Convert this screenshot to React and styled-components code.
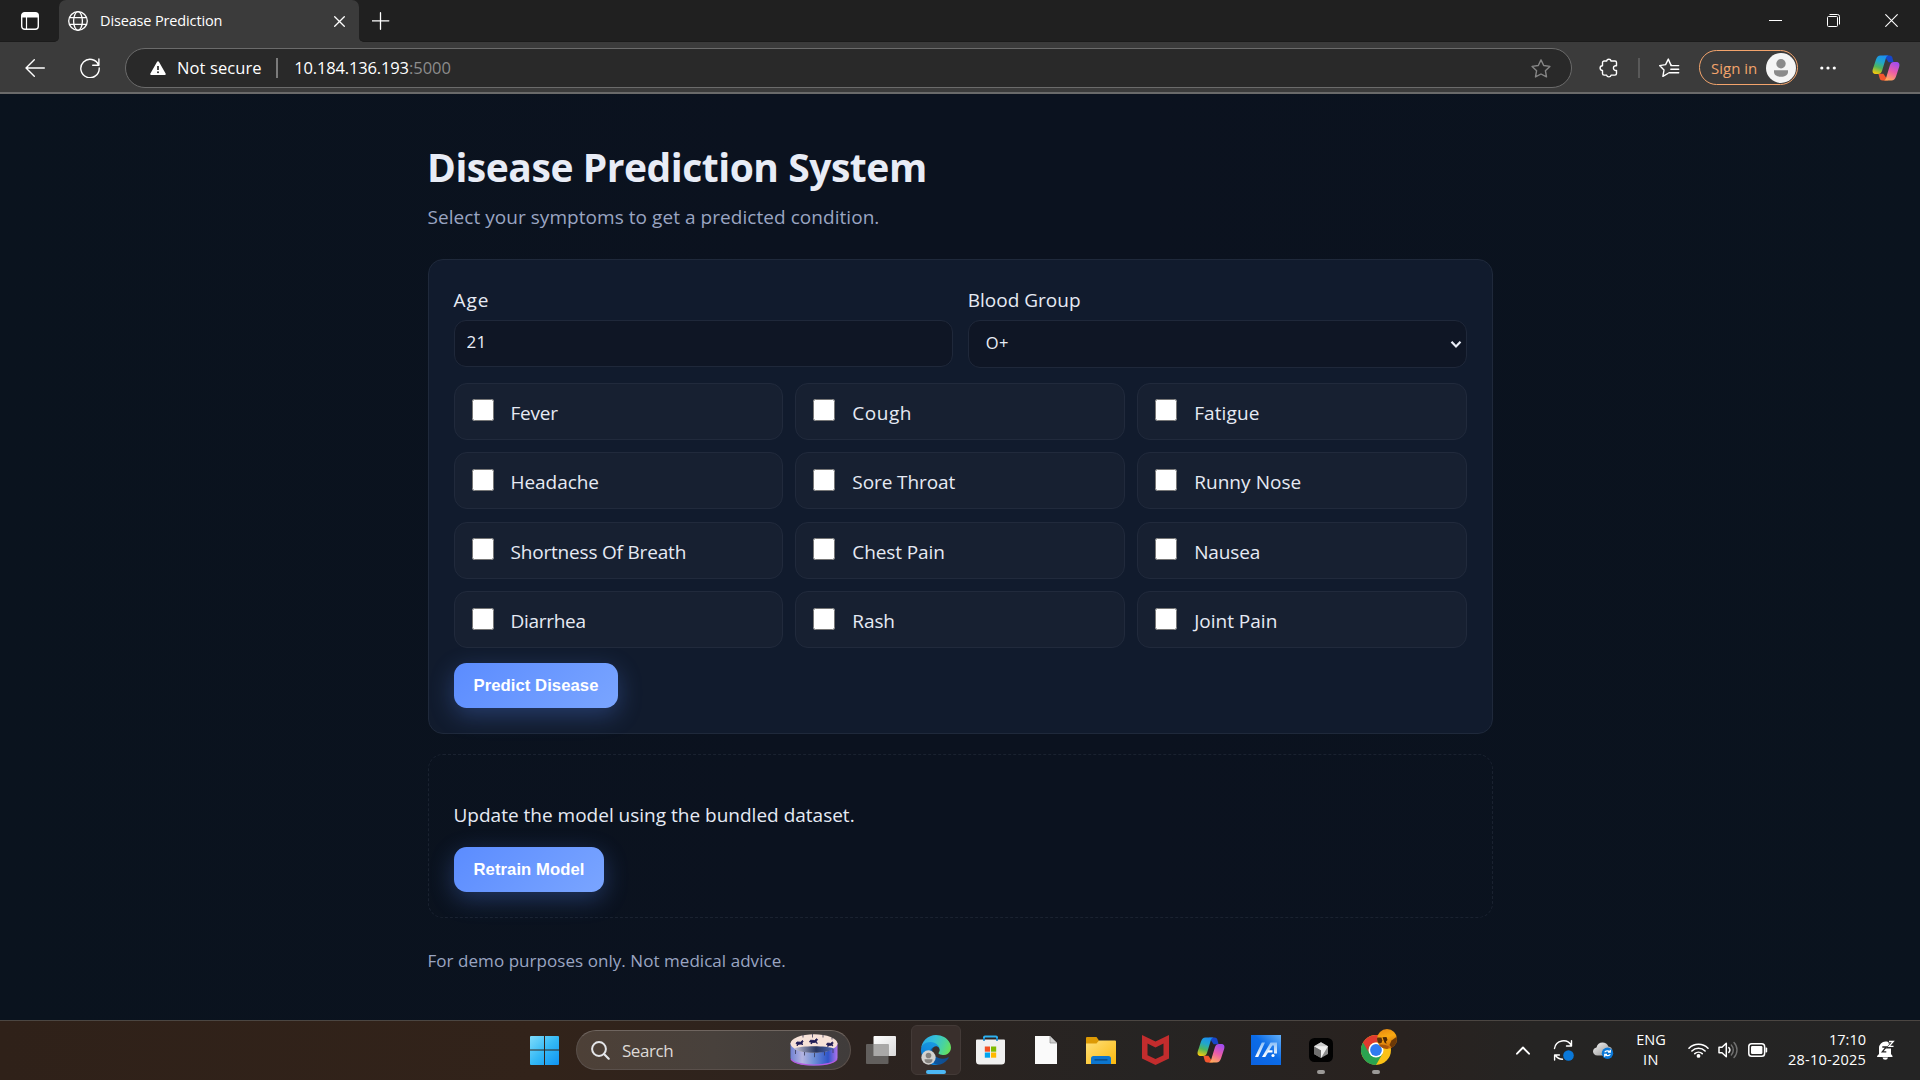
import React from "react";
import styled, { createGlobalStyle } from "styled-components";

const Global = createGlobalStyle`
  * { box-sizing: border-box; }
  html, body { margin: 0; padding: 0; background: #0b121e; overflow: hidden; }
  body { font-family: "Open Sans", "Noto Sans", sans-serif; }
  svg { display: block; flex: none; }
`;

const Screen = styled.div`
  width: 1920px;
  height: 1080px;
  display: flex;
  flex-direction: column;
  overflow: hidden;
`;

const Label = styled.span`
  white-space: nowrap;
  font-size: ${(p) => p.$size || 19}px;
  letter-spacing: ${(p) => p.$track || 0}px;
  color: ${(p) => p.$color || "#e6eaf4"};
`;

/* ---------- browser chrome ---------- */

const TabStrip = styled.header`
  height: 42px;
  flex: none;
  display: flex;
  background: #3b3b3b;
`;

const StripStart = styled.div`
  width: 59px;
  padding: 12px 0 0 21px;
  background: #202020;
  border-bottom: 1px solid #1b1b1b;
  border-bottom-right-radius: 5px;
`;

const TabHolder = styled.div`
  width: 300px;
  background: linear-gradient(#202020 50%, #3b3b3b 50%);
`;

const Tab = styled.div`
  height: 42px;
  padding: 0 14px 0 9px;
  display: flex;
  align-items: center;
  background: #3b3b3b;
  border-radius: 7px 7px 0 0;
`;

const TabTitle = styled(Label)`
  flex: 1;
  padding: 0 0 2px 12px;
`;

const StripEnd = styled.div`
  flex: 1;
  display: flex;
  align-items: center;
  padding: 0 22px 0 13px;
  background: #202020;
  border-bottom: 1px solid #1b1b1b;
  border-bottom-left-radius: 5px;
`;

const WindowControls = styled.div`
  margin-left: auto;
  display: flex;
  align-items: center;
  gap: 45px;
`;

const Toolbar = styled.nav`
  height: 52px;
  flex: none;
  display: flex;
  align-items: center;
  padding: 2px 20px 0 25px;
  background: #3b3b3b;
  border-bottom: 2px solid #6a6a6a;
`;

const ReloadSlot = styled.div`
  padding: 0 25px 0 35px;
`;

const AddressBar = styled.div`
  width: 1447px;
  height: 40px;
  display: flex;
  align-items: center;
  padding: 0 20px 0 24px;
  background: #292929;
  border: 1px solid #6b6b6b;
  border-radius: 20px;
`;

const AddressText = styled(Label)`
  padding: 0 0 2px ${(p) => p.$lead || 0}px;
`;

const BarDivider = styled.span`
  width: ${(p) => p.$thick || 1}px;
  height: 20px;
  margin: 0 ${(p) => p.$after}px 0 ${(p) => p.$before}px;
  background: ${(p) => p.$tone};
`;

const StarSlot = styled.div`
  margin-left: auto;
`;

const ExtensionSlot = styled.div`
  padding-left: 27px;
`;

const SignIn = styled.div`
  width: 99px;
  height: 35px;
  margin: 0 22px 1px 19px;
  padding: 0 1px 0 11px;
  display: flex;
  align-items: center;
  justify-content: space-between;
  border: 1.4px solid #f3a46c;
  border-radius: 18px;
`;

const MenuSlot = styled.div`
  padding-right: 35px;
`;

/* ---------- page ---------- */

const Page = styled.main`
  height: 926px;
  flex: none;
  padding: 49px 427px 0 427.5px;
  background: linear-gradient(90deg, #0a131e, #0b121f 40%, #0b121f 60%, #0a131e);
`;

const Title = styled.h1`
  margin: 0 0 11px -0.5px;
  font-size: 39px;
  line-height: 48px;
  font-weight: 700;
  letter-spacing: -0.46px;
  color: #e8ecf6;
`;

const Subtitle = styled.p`
  margin: 0 0 27px;
  font-size: 19px;
  line-height: 30px;
  letter-spacing: 0.05px;
  color: #9aa5c2;
`;

const Panel = styled.section`
  padding: 25px;
  border-radius: 15px;
  border: 1px solid #1f293b;
  background: #111b2d;
`;

const DashedPanel = styled(Panel)`
  margin-top: 20px;
  border: 1px dashed #1a2230;
  background: transparent;
`;

const Fields = styled.div`
  display: grid;
  grid-template-columns: 1fr 1fr;
  gap: 15px;
  align-items: start;
`;

const Field = styled.label`
  display: flex;
  flex-direction: column;
  gap: 5px;
  line-height: 30px;
`;

const NumberInput = styled.input`
  width: 100%;
  height: 47px;
  margin: 0;
  padding: 0 12px 4px;
  font: 17px "Open Sans", sans-serif;
  letter-spacing: 0.4px;
  color: #e9edf6;
  background: #0f1625;
  border: 1px solid #1f283a;
  border-radius: 12px;
  outline: none;
  appearance: textfield;
`;

const SelectBox = styled.div`
  position: relative;
  height: 48px;
`;

const Select = styled.select`
  width: 100%;
  height: 48px;
  padding: 0 17px 3px;
  font: 16.5px "Open Sans", sans-serif;
  letter-spacing: 0.5px;
  color: #e9edf6;
  background: #0f1625;
  border: 1px solid #1f283a;
  border-radius: 12px;
  appearance: none;
`;

const SelectArrow = styled.svg`
  position: absolute;
  right: 5px;
  top: 20px;
`;

const Symptoms = styled.div`
  display: grid;
  grid-template-columns: repeat(3, 1fr);
  gap: 12.5px 12px;
  margin: 14.6px 0 15.4px;
`;

const Symptom = styled.label`
  height: 57px;
  padding: 0 17px;
  display: flex;
  align-items: center;
  gap: 17px;
  background: #172031;
  border: 1px solid #212a3c;
  border-radius: 13px;
`;

const Check = styled.input`
  width: 22px;
  height: 22px;
  margin: 0 0 2px;
`;

const SymptomName = styled(Label)`
  padding-top: 3px;
`;

const Action = styled.button`
  display: block;
  width: ${(p) => p.$width}px;
  height: 45px;
  padding: 0 0 0 1px;
  border: 0;
  border-radius: 12.5px;
  font: 700 16.67px "Liberation Sans", Arial, sans-serif;
  letter-spacing: 0.06px;
  color: #fff;
  background: linear-gradient(135deg, #5b8cff, #7aa5ff);
  box-shadow: 0 7px 25px rgba(91, 140, 255, 0.3);
`;

const Notice = styled.p`
  margin: 20px 0 17px;
  font-size: 19px;
  line-height: 30px;
  color: #e6eaf4;
`;

const Footnote = styled.footer`
  margin-top: 30px;
  font-size: 17px;
  line-height: 25px;
  letter-spacing: 0.05px;
  color: #9aa5c2;
`;

/* ---------- taskbar ---------- */

const Taskbar = styled.div`
  height: 60px;
  flex: none;
  display: flex;
  align-items: center;
  padding-bottom: 1px;
  border-top: 1px solid #4b4642;
  background: linear-gradient(90deg, #2f2119 0%, #32231a 28%, #2c231f 45%, #262423 60%, #29221f 73%, #252423 80%, #242424 100%);
`;

const Launchers = styled.div`
  display: flex;
  align-items: center;
  padding-left: 519px;
`;

const Slot = styled.div`
  width: 50px;
  height: 50px;
  margin-right: 5px;
  display: flex;
  flex-direction: column;
  align-items: center;
  justify-content: center;
  position: relative;
  border-radius: 6px;
  border: 1px solid ${(p) => (p.$active ? "#433a37" : "transparent")};
  background: ${(p) => (p.$active ? "#392f2c" : "transparent")};
`;

const Indicator = styled.span`
  position: absolute;
  bottom: 0;
  width: ${(p) => (p.$active ? 20 : 8)}px;
  height: 4px;
  border-radius: 2px;
  background: ${(p) => (p.$active ? "#4cb8f5" : "#9b9997")};
`;

const SearchPill = styled.div`
  width: 275px;
  height: 40px;
  margin: 0 5px 0 2px;
  padding: 0 12px 0 14px;
  display: flex;
  align-items: center;
  border-radius: 20px;
  border: 1px solid #5a504b;
  border-top-color: #6f655f;
  background: linear-gradient(90deg, #4d4037, #48413c 50%, #403c3b);
`;

const SearchLabel = styled(Label)`
  flex: 1;
  padding-left: 12px;
`;

const Tray = styled.div`
  margin-left: auto;
  display: flex;
  align-items: center;
  padding-right: 25px;
`;

const TrayGap = styled.div`
  padding-left: ${(p) => p.$w}px;
`;

const Stack = styled.div`
  width: ${(p) => p.$width}px;
  display: flex;
  flex-direction: column;
  align-items: ${(p) => p.$align};
  line-height: 20px;
`;

/* ---------- icons ---------- */

const line = { fill: "none", stroke: "#fff", strokeWidth: 1.4, strokeLinecap: "round", strokeLinejoin: "round" };

const TabActions = () => (
  <svg width="18" height="18" viewBox="0 0 18 18">
    <rect x="0.7" y="0.7" width="16.6" height="16.6" rx="3" {...line} />
    <path d="M.7 5.5V3.5a2.8 2.8 0 0 1 2.8-2.8h11a2.8 2.8 0 0 1 2.8 2.8v2z" fill="#fff" />
    <path d="M5.5 5v12" {...line} strokeWidth="1.2" />
  </svg>
);

const Globe = () => (
  <svg width="20" height="20" viewBox="0 0 20 20" fill="none" stroke="#fff" strokeWidth="1.3">
    <circle cx="10" cy="10" r="9.3" />
    <ellipse cx="10" cy="10" rx="4.4" ry="9.3" />
    <path d="M1.4 6.7h17.2M1.4 13.3h17.2" />
  </svg>
);

const Cross = ({ size, weight = 1.3 }) => (
  <svg width={size} height={size} viewBox={`0 0 ${size} ${size}`}>
    <path d={`M.7 .7L${size - 0.7} ${size - 0.7}M${size - 0.7} .7L.7 ${size - 0.7}`} {...line} strokeWidth={weight} />
  </svg>
);

const Plus = () => (
  <svg width="18" height="18" viewBox="0 0 18 18"><path d="M8.5 .7v16.6M.2 8.8h16.6" {...line} strokeWidth="1.3" /></svg>
);

const Minimize = () => (
  <svg width="13" height="13" viewBox="0 0 13 13"><path d="M0 6.5h13" stroke="#fff" /></svg>
);

const Restore = () => (
  <svg width="13" height="13" viewBox="0 0 13 13" fill="none" stroke="#fff">
    <rect x=".5" y="2.5" width="10" height="10" rx="1" />
    <path d="M2.5 .5h8a2 2 0 0 1 2 2v8" />
  </svg>
);

const Back = () => (
  <svg width="20" height="18" viewBox="0 0 20 18"><path d="M9.3 .8L1 9l8.3 8.2M1 9h18.3" {...line} /></svg>
);

const Reload = () => (
  <svg width="20" height="20" viewBox="0 0 20 20">
    <path d="M18.6 7.2A9.2 9.2 0 1 0 19.2 10M18.9 .9v6.4h-6.2" {...line} />
  </svg>
);

const Warning = () => (
  <svg width="16" height="14" viewBox="0 0 16 14">
    <path d="M7.1 .7a1 1 0 0 1 1.8 0l6.7 11.8a1 1 0 0 1-.9 1.4H1.3a1 1 0 0 1-.9-1.4z" fill="#fff" />
    <path d="M8 5v4" stroke="#292929" strokeWidth="1.7" />
    <circle cx="8" cy="11.2" r="1" fill="#292929" />
  </svg>
);

const Star = () => (
  <svg width="20" height="19" viewBox="0 0 20 19">
    <path d="M10 .9l2.7 5.6 6.2.9-4.5 4.3 1.1 6.2L10 15l-5.5 2.9 1.1-6.2L1.1 7.4l6.2-.9z" {...line} stroke="#868686" />
  </svg>
);

const Puzzle = () => (
  <svg width="19" height="20" viewBox="0 0 19 20">
    <path d="M5.2 3h2.4a2.3 2.3 0 0 1 4.5 0H16a1.5 1.5 0 0 1 1.5 1.5v3.3a2.4 2.4 0 1 0 0 4.6v3.2A1.5 1.5 0 0 1 16 17.1h-3.9a2.3 2.3 0 0 1-4.5 0H5.2a1.7 1.7 0 0 1-1.7-1.7v-2.9a2.4 2.4 0 0 1 0-4.8V4.7A1.7 1.7 0 0 1 5.2 3z" {...line} />
  </svg>
);

const Favorites = () => (
  <svg width="21" height="20" viewBox="0 0 21 20">
    <path d="M12.3 7l-.5-.1L9.3 1.1 6.6 6.6l-6 1 4.4 4.4-1.1 6.4 4.9-2.9M11.8 7.6h7.9M11.8 11.2h7.9M9.9 14.8h9.8" {...line} />
  </svg>
);

const Avatar = ({ size = 30 }) => (
  <svg width={size} height={size} viewBox="0 0 30 30">
    <circle cx="15" cy="15" r="15" fill="#f4f4f4" />
    <circle cx="15" cy="10.7" r="4.7" fill="#8a8a8a" />
    <path d="M8 17.2h14v1.8c0 3-3 4.8-7 4.8s-7-1.8-7-4.8z" fill="#8a8a8a" />
  </svg>
);

const Dots = () => (
  <svg width="17" height="4" viewBox="0 0 17 4" fill="#fff">
    <circle cx="1.8" cy="2" r="1.6" /><circle cx="8" cy="2" r="1.6" /><circle cx="14.3" cy="2" r="1.6" />
  </svg>
);

const Copilot = ({ id }) => (
  <svg width="28" height="26" viewBox="0 0 28 26">
    <defs>
      <linearGradient id={`${id}a`} x1=".6" y1="0" x2=".3" y2="1">
        <stop offset="0" stopColor="#1b8ff0" /><stop offset=".35" stopColor="#22a7c9" />
        <stop offset=".65" stopColor="#4fb65c" /><stop offset="1" stopColor="#f2c80f" />
      </linearGradient>
      <linearGradient id={`${id}b`} x1=".7" y1="0" x2=".3" y2="1">
        <stop offset="0" stopColor="#a14cf0" /><stop offset=".5" stopColor="#ec5ca8" /><stop offset="1" stopColor="#ffab5c" />
      </linearGradient>
    </defs>
    <path d="M12 .5h5.5c2 0 2.6 1.2 3.1 3l1 3.7h-5z" fill="#1746c9" />
    <path d="M16 25.5h-5.5c-2 0-2.6-1.2-3.1-3l-1-3.7h5z" fill="#f2562f" />
    <path d="M8.5 .5h8c-1.7.3-2.3 1.6-2.8 3.3L10 16c-.7 2-1.9 3-3.8 3H4C1 19 0 17 .8 14.2L4 4.5c1-2.7 2.2-4 4.5-4z" fill={`url(#${id}a)`} />
    <path d="M19.5 25.5h-8c1.7-.3 2.3-1.6 2.8-3.3L18 10c.7-2 1.9-3 3.8-3H24c3 0 4 2 3.2 4.8L24 21.5c-1 2.7-2.2 4-4.5 4z" fill={`url(#${id}b)`} />
  </svg>
);

const Windows = () => (
  <svg width="30" height="30" viewBox="0 0 30 30">
    <defs><linearGradient id="win" x1="0" y1="0" x2="1" y2="1"><stop offset="0" stopColor="#7fdcfb" /><stop offset=".5" stopColor="#35b9f5" /><stop offset="1" stopColor="#0f93f2" /></linearGradient></defs>
    <path d="M1 2a1 1 0 0 1 1-1h13v13.5H1zM16 1h13a1 1 0 0 1 1 1v12.5H16zM1 15.5h14V30H2a1 1 0 0 1-1-1zM16 15.5h14V29a1 1 0 0 1-1 1H16z" fill="url(#win)" />
  </svg>
);

const Magnifier = () => (
  <svg width="19" height="19" viewBox="0 0 19 19">
    <circle cx="8" cy="8" r="6.9" fill="none" stroke="#e4e6ea" strokeWidth="2" />
    <path d="M13 13l4.7 4.7" stroke="#e4e6ea" strokeWidth="2.2" strokeLinecap="round" />
  </svg>
);

const Zoetrope = () => (
  <svg width="48" height="32" viewBox="0 0 48 32">
    <defs>
      <linearGradient id="zoe" x1="0" x2="1"><stop offset="0" stopColor="#7182d4" /><stop offset=".25" stopColor="#b4b4e0" /><stop offset=".5" stopColor="#6f8fd6" /><stop offset=".8" stopColor="#2f55c8" /><stop offset="1" stopColor="#b073ee" /></linearGradient>
      <linearGradient id="zoeIn" x1="0" x2="1"><stop offset="0" stopColor="#c8c6da" /><stop offset=".55" stopColor="#27355f" /><stop offset="1" stopColor="#4d68b8" /></linearGradient>
    </defs>
    <path d="M.5 9v15c0 4 10 7.5 23.5 7.5S47.5 28 47.5 24V9z" fill="url(#zoe)" />
    <path d="M1 25c2 3.5 11 6 23 6s21-2.5 23-6" fill="none" stroke="#b45be0" strokeWidth="1.2" />
    <ellipse cx="24" cy="9.5" rx="23.5" ry="9.2" fill="#f7e2d8" />
    <path d="M4 14.5C11 11.5 37 11.5 44 14.5 40 17.5 33 18.7 24 18.7S8 17.5 4 14.5z" fill="url(#zoeIn)" />
    <path d="M6 9.5l1-1.5 3.5.2 2-1.7.6.7-1.1 1.8.5 2-1-1-2.7.2-1.8 1.6.4-2zM19.5 8l1-1.8 4 .3 2.3-1.8.7.9-1.2 1.8 1 2.1-1.8-1.2-2.7.2-1.8 1.5.4-2.1zM36.5 10.5l.9-1.4 3.2.3 1.8-1.3.8.7-1 1.5.6 1.7-1.3-.8-2.4.2-1.4 1.2.3-1.6z" fill="#1e1b55" stroke="#1e1b55" strokeWidth=".9" />
    <path d="M13 1v2.5M22.5 0v3.5M33 1v2.5M42 3.5v2M5.5 16v4M14.5 18v3.5M24.5 18.7v4.5M34.5 18v3.5M43 15v4" stroke="#3a3b58" strokeWidth=".8" />
  </svg>
);

const TaskView = () => (
  <svg width="30" height="28" viewBox="0 0 30 28">
    <defs><linearGradient id="tv" x1="0" y1="0" x2="1" y2="1"><stop offset="0" stopColor="#fff" /><stop offset="1" stopColor="#d9d9d9" /></linearGradient></defs>
    <rect x="7.5" y="0" width="22.5" height="20" rx="1" fill="url(#tv)" />
    <rect x="0" y="8" width="22.5" height="20" rx="1" fill="#686664" fillOpacity=".9" />
    <path d="M7.5 8h15v12h-15z" fill="#a9a8a7" />
  </svg>
);

const Edge = () => (
  <svg width="30" height="30" viewBox="0 0 256 256">
    <defs>
      <linearGradient id="ea" x1=".2" y1=".5" x2="1" y2=".5"><stop offset="0" stopColor="#0c59a4" /><stop offset="1" stopColor="#114a8b" /></linearGradient>
      <linearGradient id="eb" x1=".7" y1="0" x2=".3" y2="1"><stop offset="0" stopColor="#1b9de2" /><stop offset=".6" stopColor="#0f86dc" /><stop offset="1" stopColor="#0078d4" /></linearGradient>
      <linearGradient id="ec" x1="0" y1=".3" x2="1" y2=".6"><stop offset="0" stopColor="#28a9e8" /><stop offset=".4" stopColor="#35c1d8" /><stop offset=".75" stopColor="#4bd49a" /><stop offset="1" stopColor="#66e05c" /></linearGradient>
    </defs>
    <path fill="url(#ea)" d="M231 190.5c-3.4 1.8-6.9 3.4-10.5 4.7-11.5 4.3-23.6 6.5-35.9 6.5-47.3 0-88.5-32.5-88.5-74.3.1-11.4 6.4-21.9 16.4-27.3-42.8 1.8-53.8 46.4-53.8 72.5 0 73.9 68.1 81.4 82.8 81.4 7.9 0 19.8-2.3 27-4.6l1.3-.4c27.6-9.5 51-28.1 66.6-52.8 1.2-1.9.6-4.3-1.2-5.5-1.3-.8-2.9-.9-4.2-.2z" />
    <path fill="url(#eb)" d="M105.7 241.4c-8.9-5.5-16.6-12.8-22.7-21.3-26.3-36-18.4-86.5 17.6-112.8 3.8-2.7 7.7-5.2 11.9-7.2 3.1-1.5 8.4-4.1 15.5-4 10.1.1 19.6 4.9 25.7 13 4 5.4 6.3 11.9 6.4 18.7 0-.2 24.5-79.6-80-79.6-43.9 0-80 41.7-80 78.2-.2 19.3 4 38.5 12.1 56 27.6 58.8 94.8 87.6 156.4 67.1-21.1 6.6-44.1 3.7-62.9-8.1z" />
    <path fill="url(#ec)" d="M152.3 148.9c-.8 1-3.3 2.5-3.3 5.7 0 2.6 1.7 5.1 4.7 7.2 14.4 10 41.5 8.7 41.6 8.7 10.7 0 21.1-2.9 30.3-8.3 18.8-11 30.4-31.1 30.4-52.9.3-22.4-8-37.3-11.3-43.9C223.5 23.9 177.7 0 128 0 58 0 1 56.2 0 126.2c.5-36.5 36.8-66 80-66 3.5 0 23.5.3 42 10.1 16.3 8.6 24.9 18.9 30.8 29.2 6.2 10.7 7.3 24.1 7.3 29.5s-2.7 13.3-7.8 19.9z" />
    <circle cx="64" cy="192" r="61" fill="#d4d2d0" />
    <circle cx="64" cy="175" r="24" fill="#85827f" />
    <path fill="#85827f" d="M30 206h68c2 22-14 34-34 34s-36-12-34-34z" />
  </svg>
);

const Store = () => (
  <svg width="30" height="30" viewBox="0 0 30 30">
    <path d="M8 7V2.5a1 1 0 0 1 1-1h11a1 1 0 0 1 1 1V7" fill="none" stroke="#2fb1ef" strokeWidth="2" />
    <path d="M0 5.5a1 1 0 0 1 1-1h27a1 1 0 0 1 1 1V26a3.5 3.5 0 0 1-3.5 3.5h-22A3.5 3.5 0 0 1 0 26z" fill="#f0f0f0" />
    <path d="M8 5.8V3M21 5.8V3" stroke="#1783c4" strokeWidth="2" />
    <path d="M8.8 11.5H14v5.2H8.8z" fill="#f25022" /><path d="M15 11.5h5.2v5.2H15z" fill="#7fba00" />
    <path d="M8.8 17.5H14v5.2H8.8z" fill="#00a4ef" /><path d="M15 17.5h5.2v5.2H15z" fill="#ffb900" />
  </svg>
);

const Doc = () => (
  <svg width="22" height="28" viewBox="0 0 22 28">
    <path d="M0 0h15l7 7v21H0z" fill="#fafafa" />
    <path d="M15 0v7h7z" fill="#cfcfcf" stroke="#8a8a8a" strokeWidth=".7" />
  </svg>
);

const Folder = () => (
  <svg width="30" height="27" viewBox="0 0 30 27">
    <defs><linearGradient id="fo" x1="0" y1="0" x2="1" y2="1"><stop offset="0" stopColor="#ffe07a" /><stop offset="1" stopColor="#fbb90d" /></linearGradient></defs>
    <path d="M0 1a1 1 0 0 1 1-1h9.5L13 3.5V8H0z" fill="#dd9a05" />
    <path d="M0 6.5h10.5L13 3.5h16a1 1 0 0 1 1 1V27H0z" fill="url(#fo)" />
    <path d="M5 27v-5.5a2.5 2.5 0 0 1 2.5-2.5h15a2.5 2.5 0 0 1 2.5 2.5V27z" fill="#0c76cf" />
    <path d="M9 22.8h12" stroke="#08467f" strokeWidth="1.3" strokeLinecap="round" />
  </svg>
);

const Shield = () => (
  <svg width="28" height="30" viewBox="0 0 28 30">
    <path fillRule="evenodd" d="M0 0l13.5 6.5L27 0v23.5L13.5 30 0 23.5zM5.5 8.5v11.7l8 3.8 8-3.8V8.5l-8 4z" fill="#c22c2d" />
  </svg>
);

const Asus = () => (
  <svg width="30" height="30" viewBox="0 0 30 30">
    <defs>
      <linearGradient id="as" x1="0" y1="1" x2="1" y2="0"><stop offset="0" stopColor="#0b62e0" /><stop offset=".55" stopColor="#0b6ce8" /><stop offset="1" stopColor="#63b0fa" /></linearGradient>
      <linearGradient id="at" x1="0" y1="1" x2="0" y2="0"><stop offset="0" stopColor="#fff" /><stop offset="1" stopColor="#8cc0f8" /></linearGradient>
    </defs>
    <path d="M0 0h30v30H0z" fill="url(#as)" />
    <path d="M4 22L10.8 7.5H14L7.2 22zM11 22L19.5 7.5H26V18.5h-3v-8h-1.8L14.3 22z" fill="url(#at)" />
    <path d="M17.5 15.3h4v2.2h-5.200z" fill="#fff" />
    <circle cx="22" cy="20.5" r="1.6" fill="#fff" />
  </svg>
);

const CursorApp = () => (
  <svg width="24" height="24" viewBox="0 0 24 24">
    <rect width="24" height="24" rx="5.5" fill="#020202" />
    <path d="M12 4.3l7 4V16l-7 4-7-4V8.3z" fill="#8d8d8d" />
    <path d="M12 4.3l7 4-7 3.9-7-3.9z" fill="#c9c9c9" />
    <path d="M12 12.2V20l-7-4V8.3z" fill="#6f6f6f" />
    <path d="M5 8.3h14L12 20v-7.7z" fill="#eee" />
  </svg>
);

const Chrome = () => (
  <svg width="36" height="36" viewBox="0 0 36 36">
    <defs>
      <clipPath id="badge"><circle cx="26" cy="10" r="10" /></clipPath>
      <linearGradient id="amber" x1=".3" y1="0" x2=".6" y2="1"><stop offset="0" stopColor="#e88a10" /><stop offset=".4" stopColor="#f9a912" /><stop offset="1" stopColor="#c8650a" /></linearGradient>
    </defs>
    <circle cx="15" cy="21" r="15" fill="#fbc116" />
    <path d="M15 21L2 13.5A15 15 0 0 0 15 36l6.5-11.3z" fill="#2aa350" />
    <path d="M2 13.5A15 15 0 0 1 28 13.5H15A7.5 7.5 0 0 0 8.5 24.7z" fill="#e03b2f" />
    <circle cx="15" cy="21" r="7.5" fill="#fff" /><circle cx="15" cy="21" r="5.9" fill="#2f7bf0" />
    <g clipPath="url(#badge)">
      <path d="M16 0h20v20H16z" fill="url(#amber)" />
      <path d="M16 8.5h4.5l.8 3-.8 2.5-2.5.5-2-2z" fill="#5c300a" />
      <path d="M21.5 8.3l4-.3 1 3-1.5 1.5.5 2.5-2-1.5-1-2.5z" fill="#4a2606" />
      <path d="M30.5 11.5l5.5-4V16l-4.5 3.5-3-3.5z" fill="#6b3908" />
      <path d="M17 16c4-1 8 0 11 1.5l-2 3-7-1z" fill="#a8550a" />
    </g>
  </svg>
);

const ChromeBox = styled.div`
  margin: -6px -6px 0 0;
`;

const ChevronUp = () => (
  <svg width="14" height="9" viewBox="0 0 14 9"><path d="M1 7.7L7 1.5l6 6.2" {...line} strokeWidth="1.9" /></svg>
);

const SyncUpdate = () => (
  <svg width="21" height="21" viewBox="0 0 21 21">
    <path d="M1.5 8.5A9 9 0 0 1 18.3 5.5M18.5 .8v5.2h-5M2.5 15.5A9 9 0 0 0 9.5 19.2M1.6 20v-5h4.8" {...line} />
    <circle cx="15.5" cy="15.5" r="5.3" fill="#0a78d8" />
  </svg>
);

const CloudSync = () => (
  <svg width="21" height="17" viewBox="0 0 21 17">
    <defs><linearGradient id="cl" x1="0" y1="0" x2="1" y2="1"><stop offset="0" stopColor="#f4f4f4" /><stop offset="1" stopColor="#8d8d8d" /></linearGradient></defs>
    <path d="M4.5 13.5C1.8 13.5 0 11.7 0 9.5c0-2.1 1.5-3.7 3.5-4C4.3 2.3 6.5.5 9.5.5c2.7 0 5 1.6 5.8 4 2.6.2 4 2 4 4.2 0 2.8-1.8 4.8-4.3 4.8z" fill="url(#cl)" />
    <circle cx="14.5" cy="11.2" r="5.7" fill="#0a78d8" />
    <path d="M11.7 10.3c1-1.7 3.7-2 5-.5M17.3 7.8v2.3H15M17.3 12.2c-1 1.7-3.7 2-5 .5M11.7 14.7v-2.3H14" fill="none" stroke="#fff" strokeWidth="1.2" />
  </svg>
);

const Wifi = () => (
  <svg width="21" height="16" viewBox="0 0 21 16">
    <path d="M1 6.2a13.5 13.5 0 0 1 19 0M3.9 9a9.4 9.4 0 0 1 13.2 0M6.8 11.7a5.4 5.4 0 0 1 7.4 0" {...line} strokeWidth="1.6" />
    <circle cx="10.5" cy="13.9" r="1.9" fill="#fff" />
  </svg>
);

const Volume = () => (
  <svg width="21" height="18" viewBox="0 0 21 18">
    <path d="M1 6.3h3L8.3 2.2v13.6L4 11.7H1z" {...line} strokeWidth="1.5" />
    <path d="M10.8 6.5a3.7 3.7 0 0 1 0 5" {...line} />
    <path d="M13.3 4a7.3 7.3 0 0 1 0 10M16 1.5a10.9 10.9 0 0 1 0 15" {...line} stroke="#727272" />
  </svg>
);

const Battery = () => (
  <svg width="20" height="14" viewBox="0 0 20 14">
    <rect x=".8" y=".8" width="15.8" height="12.4" rx="2.8" {...line} strokeWidth="1.5" />
    <rect x="3" y="3" width="11.4" height="8" rx="1.2" fill="#fff" />
    <path d="M17.5 4.5h.7a1 1 0 0 1 1 1v3a1 1 0 0 1-1 1h-.7z" fill="#fff" />
  </svg>
);

const Bell = () => (
  <svg width="18" height="20" viewBox="0 0 18 20">
    <path d="M2 14V8A6.5 6.5 0 0 1 8.5 1.5c2 0 3.5.6 4.8 1.8L14 8v6l1.5 2a.7.7 0 0 1-.7 1H.8a.7.7 0 0 1-.7-1z" fill="#fff" />
    <path d="M5.5 17.5h5.5a2.8 2.8 0 0 1-5.5 0z" fill="#fff" />
    <path d="M5.3 7h4L5.3 11.8h4" fill="none" stroke="#252525" strokeWidth="1.3" />
    <path d="M11.5 2h4.8l-4.3 4.8h4.3" fill="none" stroke="#252525" strokeWidth="3.2" />
    <path d="M12 1.5h4.3L12 6.3h4.5" fill="none" stroke="#fff" strokeWidth="1.3" />
  </svg>
);

/* ---------- app ---------- */

const SYMPTOMS = [
  ["Fever", -0.25], ["Cough", 0.5], ["Fatigue", 0.1],
  ["Headache", -0.05], ["Sore Throat", -0.1], ["Runny Nose", 0.06],
  ["Shortness Of Breath", -0.19], ["Chest Pain", -0.1], ["Nausea", -0.15],
  ["Diarrhea", -0.3], ["Rash", -0.1], ["Joint Pain", 0],
];

export default function App() {
  return (
    <Screen>
      <Global />
      <TabStrip>
        <StripStart><TabActions /></StripStart>
        <TabHolder>
          <Tab>
            <Globe />
            <TabTitle $size={14.5} $track={-0.14} $color="#fff">Disease Prediction</TabTitle>
            <Cross size={11} />
          </Tab>
        </TabHolder>
        <StripEnd>
          <Plus />
          <WindowControls><Minimize /><Restore /><Cross size={13} weight={1.1} /></WindowControls>
        </StripEnd>
      </TabStrip>
      <Toolbar>
        <Back />
        <ReloadSlot><Reload /></ReloadSlot>
        <AddressBar>
          <Warning />
          <AddressText $lead={11} $size={16.5} $track={0.1} $color="#fff">Not secure</AddressText>
          <BarDivider $before={14} $after={16.5} $thick={2} $tone="#7b7b7b" />
          <AddressText $size={16.5} $track={-0.15} $color="#fff">10.184.136.193</AddressText>
          <AddressText $size={16.5} $color="#8c8c8c">:5000</AddressText>
          <StarSlot><Star /></StarSlot>
        </AddressBar>
        <ExtensionSlot><Puzzle /></ExtensionSlot>
        <BarDivider $before={20} $after={19} $thick={2} $tone="#595959" />
        <Favorites />
        <SignIn><Label $size={15} $color="#f3a46c">Sign in</Label><Avatar /></SignIn>
        <Dots />
        <MenuSlot />
        <Copilot id="bar" />
      </Toolbar>

      <Page>
        <Title>Disease Prediction System</Title>
        <Subtitle>Select your symptoms to get a predicted condition.</Subtitle>
        <Panel>
          <Fields>
            <Field>
              <Label $track={0.9}>Age</Label>
              <NumberInput type="text" defaultValue="21" />
            </Field>
            <Field>
              <Label>Blood Group</Label>
              <SelectBox>
                <Select defaultValue="O+"><option>O+</option></Select>
                <SelectArrow width="12" height="9" viewBox="0 0 12 9">
                  <path d="M1.5 1.8L6 6.5l4.5-4.7" fill="none" stroke="#e9edf6" strokeWidth="2.2" />
                </SelectArrow>
              </SelectBox>
            </Field>
          </Fields>
          <Symptoms>
            {SYMPTOMS.map(([name, track]) => (
              <Symptom key={name}>
                <Check type="checkbox" />
                <SymptomName $track={track}>{name}</SymptomName>
              </Symptom>
            ))}
          </Symptoms>
          <Action $width={164}>Predict Disease</Action>
        </Panel>
        <DashedPanel>
          <Notice>Update the model using the bundled dataset.</Notice>
          <Action $width={150}>Retrain Model</Action>
        </DashedPanel>
        <Footnote>For demo purposes only. Not medical advice.</Footnote>
      </Page>

      <Taskbar>
        <Launchers>
          <Slot><Windows /></Slot>
          <SearchPill>
            <Magnifier />
            <SearchLabel $size={17} $track={-0.45} $color="#dedad7">Search</SearchLabel>
            <Zoetrope />
          </SearchPill>
          <Slot><TaskView /></Slot>
          <Slot $active><Edge /><Indicator $active /></Slot>
          <Slot><Store /></Slot>
          <Slot><Doc /></Slot>
          <Slot><Folder /></Slot>
          <Slot><Shield /></Slot>
          <Slot><Copilot id="task" /></Slot>
          <Slot><Asus /></Slot>
          <Slot><CursorApp /><Indicator /></Slot>
          <Slot><ChromeBox><Chrome /></ChromeBox><Indicator /></Slot>
        </Launchers>
        <Tray>
          <ChevronUp />
          <TrayGap $w={23} /><SyncUpdate />
          <TrayGap $w={19} /><CloudSync />
          <TrayGap $w={17} />
          <Stack $width={40} $align="center">
            <Label $size={14.5} $color="#fff">ENG</Label>
            <Label $size={14.5} $track={0.4} $color="#fff">IN</Label>
          </Stack>
          <TrayGap $w={17} /><Wifi />
          <TrayGap $w={9} /><Volume />
          <TrayGap $w={9} /><Battery />
          <TrayGap $w={13} />
          <Stack $width={85} $align="flex-end">
            <Label $size={14.5} $color="#fff">17:10</Label>
            <Label $size={14.5} $track={0.23} $color="#fff">28-10-2025</Label>
          </Stack>
          <TrayGap $w={11} /><Bell />
        </Tray>
      </Taskbar>
    </Screen>
  );
}
